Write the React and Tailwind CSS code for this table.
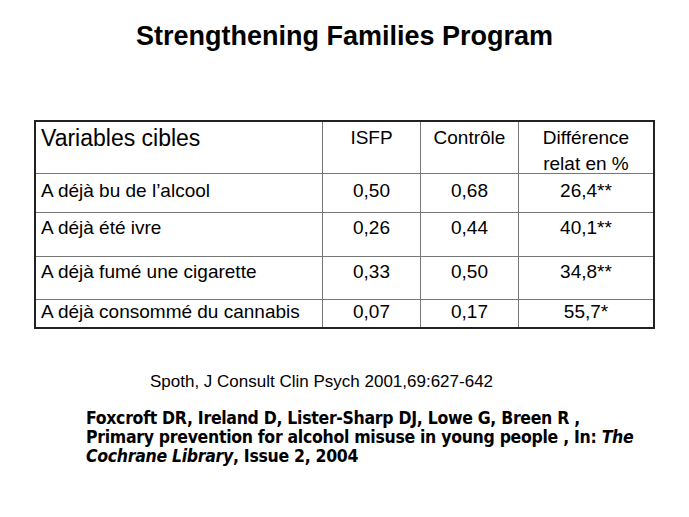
import React from 'react';

const rows = [
  { label: 'A déjà bu de l’alcool', isfp: '0,50', ctrl: '0,68', diff: '26,4**', h: 'h-[39px]', pt: 'pt-[6px]' },
  { label: 'A déjà été ivre', isfp: '0,26', ctrl: '0,44', diff: '40,1**', h: 'h-[44px]', pt: 'pt-[4px]' },
  { label: 'A déjà fumé une cigarette', isfp: '0,33', ctrl: '0,50', diff: '34,8**', h: 'h-[43px]', pt: 'pt-[4px]' },
  { label: 'A déjà consommé du cannabis', isfp: '0,07', ctrl: '0,17', diff: '55,7*', h: 'h-[27px]', pt: 'pt-[1px]' },
];

const App = () => {
  return (
    <div className="w-[689px] h-[517px] bg-white text-black overflow-hidden font-['Liberation_Sans',Arial,sans-serif]">
      {/* titre */}
      <h1 className="pt-[20px] text-center text-[27px] leading-[32px] font-bold">
        Strengthening Families Program
      </h1>

      {/* tableau */}
      <div className="ml-[34px] mt-[68px] w-[621px] border-2 border-[#222] text-[19px] leading-[22px]">
        <div className="flex h-[52px] border-b border-[#777] leading-[26px]">
          <div className="w-[286px] pl-[5px] pt-[3px] text-[23px]">Variables cibles</div>
          <div className="w-[98px] border-l border-[#777] pt-[3px] text-center">ISFP</div>
          <div className="w-[98px] border-l border-[#777] pt-[3px] text-center">Contrôle</div>
          <div className="flex-1 border-l border-[#777] pt-[3px] text-center">
            Différence
            <br />
            relat en %
          </div>
        </div>
        {rows.map((row, i) => (
          <div
            key={i}
            className={`flex ${row.h} ${i < rows.length - 1 ? 'border-b border-[#777]' : ''}`}
          >
            <div className={`w-[286px] pl-[5px] ${row.pt}`}>{row.label}</div>
            <div className={`w-[98px] border-l border-[#777] text-center ${row.pt}`}>{row.isfp}</div>
            <div className={`w-[98px] border-l border-[#777] text-center ${row.pt}`}>{row.ctrl}</div>
            <div className={`flex-1 border-l border-[#777] text-center ${row.pt}`}>{row.diff}</div>
          </div>
        ))}
      </div>

      {/* références */}
      <p className="ml-[150px] mt-[43px] text-[17px] leading-[20px]">
        Spoth, J Consult Clin Psych 2001,69:627-642
      </p>
      <p className="ml-[86px] mt-[17px] w-[590px] text-[17.5px] leading-[19px] tracking-[-0.3px] font-bold font-['DejaVu_Sans_Condensed','DejaVu_Sans',Verdana,sans-serif]">
        Foxcroft DR, Ireland D, Lister-Sharp DJ, Lowe G, Breen R ,
        <br />
        Primary prevention for alcohol misuse in young people , In: <i>The</i>
        <br />
        <i>Cochrane Library</i>, Issue 2, 2004
      </p>
    </div>
  );
};

export default App;
